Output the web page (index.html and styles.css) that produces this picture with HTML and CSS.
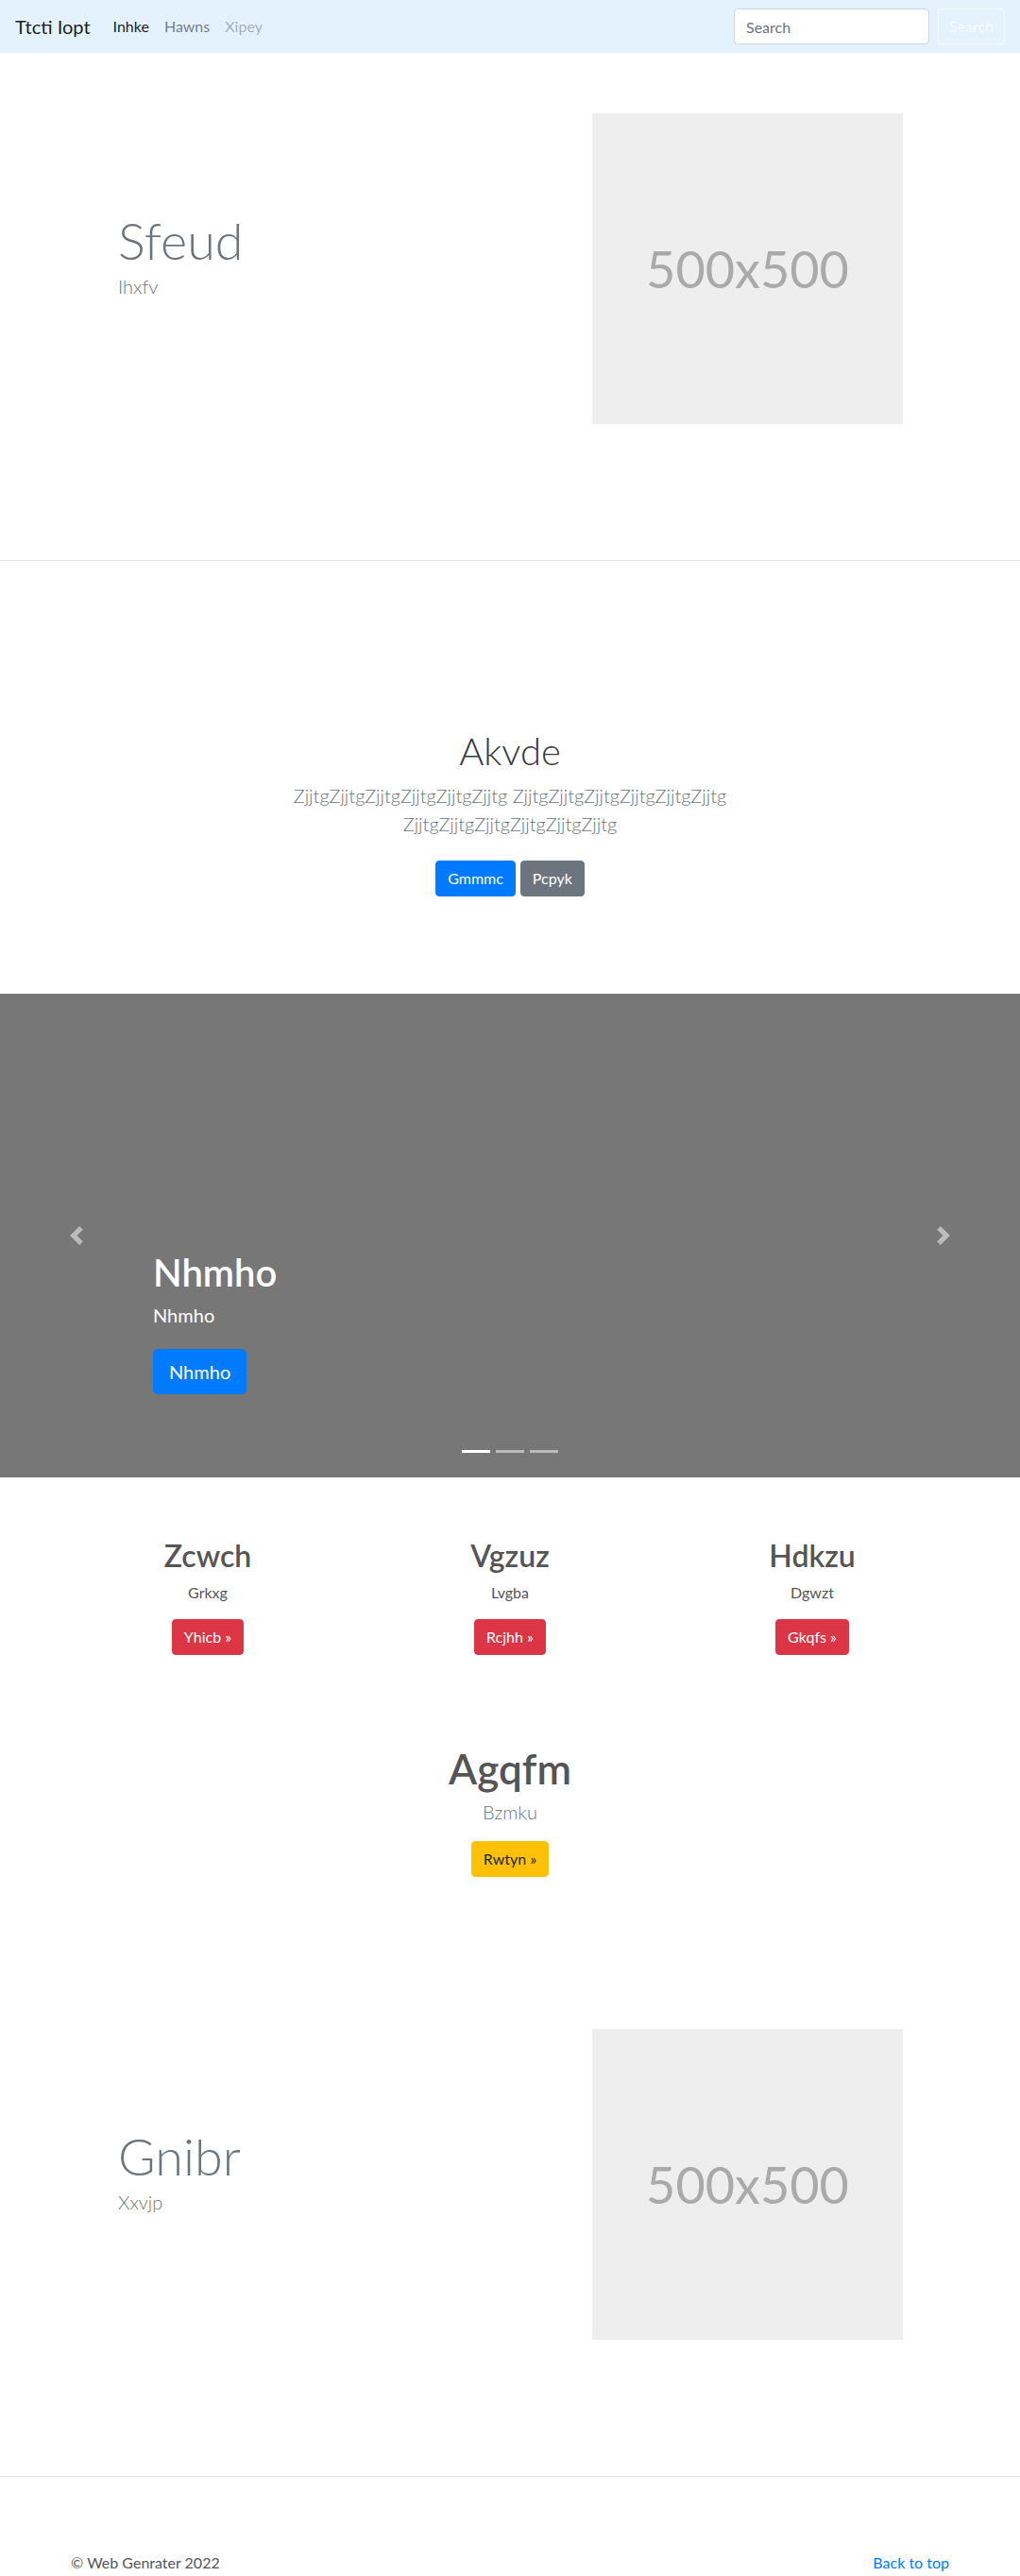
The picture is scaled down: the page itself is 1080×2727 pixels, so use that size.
FILE: index.html
```html
<!DOCTYPE html>
<html lang="en">
<head>
<meta charset="utf-8">
<title>Ttcti Iopt</title>
<link rel="stylesheet" href="styles.css">
</head>
<body>
<nav class="navbar">
  <a class="brand" href="#">Ttcti Iopt</a>
  <ul class="nav">
    <li><a class="nav-link active" href="#">Inhke</a></li>
    <li><a class="nav-link" href="#">Hawns</a></li>
    <li><a class="nav-link disabled" href="#">Xipey</a></li>
  </ul>
  <form class="search">
    <input class="search-input" type="search" placeholder="Search">
    <button class="search-btn" type="button">Search</button>
  </form>
</nav>

<section class="split">
  <div class="split-inner">
    <div class="split-text">
      <h1 class="display">Sfeud</h1>
      <p class="lead muted">Ihxfv</p>
    </div>
    <div class="split-media">
      <div class="placeholder">500x500</div>
    </div>
  </div>
</section>

<section class="intro">
  <div class="intro-inner">
    <h1 class="intro-title">Akvde</h1>
    <p class="lead muted">ZjjtgZjjtgZjjtgZjjtgZjjtgZjjtg ZjjtgZjjtgZjjtgZjjtgZjjtgZjjtg ZjjtgZjjtgZjjtgZjjtgZjjtgZjjtg</p>
    <div class="btn-row">
      <a class="btn btn-primary" href="#">Gmmmc</a>
      <a class="btn btn-secondary" href="#">Pcpyk</a>
    </div>
  </div>
</section>

<section class="carousel">
  <ol class="indicators">
    <li class="active"></li>
    <li></li>
    <li></li>
  </ol>
  <div class="caption">
    <h1 class="caption-title">Nhmho</h1>
    <p class="caption-text">Nhmho</p>
    <p class="caption-actions"><a class="btn btn-lg btn-primary" href="#">Nhmho</a></p>
  </div>
  <a class="control control-prev" href="#" aria-label="Previous">
    <svg width="20" height="20" viewBox="0 0 8 8"><path fill="#fff" d="M5.25 0l-4 4 4 4 1.5-1.5L4.25 4l2.5-2.5L5.25 0z"/></svg>
  </a>
  <a class="control control-next" href="#" aria-label="Next">
    <svg width="20" height="20" viewBox="0 0 8 8"><path fill="#fff" d="M2.75 0l-1.5 1.5L3.75 4l-2.5 2.5L2.75 8l4-4-4-4z"/></svg>
  </a>
</section>

<section class="marketing">
  <div class="col">
    <h2 class="col-title">Zcwch</h2>
    <p class="col-text">Grkxg</p>
    <p class="col-actions"><a class="btn btn-danger" href="#">Yhicb &raquo;</a></p>
  </div>
  <div class="col">
    <h2 class="col-title">Vgzuz</h2>
    <p class="col-text">Lvgba</p>
    <p class="col-actions"><a class="btn btn-danger" href="#">Rcjhh &raquo;</a></p>
  </div>
  <div class="col">
    <h2 class="col-title">Hdkzu</h2>
    <p class="col-text">Dgwzt</p>
    <p class="col-actions"><a class="btn btn-danger" href="#">Gkqfs &raquo;</a></p>
  </div>
</section>

<section class="cta">
  <h2 class="cta-title">Agqfm</h2>
  <p class="lead muted cta-lead">Bzmku</p>
  <p class="col-actions"><a class="btn btn-warning" href="#">Rwtyn &raquo;</a></p>
</section>

<section class="split">
  <div class="split-inner">
    <div class="split-text">
      <h1 class="display">Gnibr</h1>
      <p class="lead muted">Xxvjp</p>
    </div>
    <div class="split-media">
      <div class="placeholder">500x500</div>
    </div>
  </div>
</section>

<footer class="footer">
  <p class="copy">&copy; Web Genrater 2022</p>
  <a class="to-top" href="#">Back to top</a>
</footer>
</body>
</html>
```

FILE: styles.css
```css
* { box-sizing: border-box; }

body {
  margin: 0;
  font-family: Lato, "Liberation Sans", Arial, sans-serif;
  font-size: 16px;
  line-height: 1.5;
  color: #212529;
  background: #fff;
}

a { text-decoration: none; }
p { margin: 0 0 16px; }
h1, h2 { margin: 0 0 8px; line-height: 1.2; }

/* navbar */
.navbar {
  display: flex;
  align-items: center;
  height: 56px;
  padding: 8px 16px;
  background: #e3f2fd;
}
.brand {
  font-size: 20px;
  line-height: 30px;
  margin-right: 16px;
  color: rgba(0, 0, 0, 0.9);
}
.nav {
  display: flex;
  list-style: none;
  margin: 0;
  padding: 0;
}
.nav-link {
  display: block;
  padding: 8px;
  color: rgba(0, 0, 0, 0.5);
}
.nav-link.active { color: rgba(0, 0, 0, 0.9); }
.nav-link.disabled { color: rgba(0, 0, 0, 0.3); }
.search {
  display: flex;
  margin-left: auto;
}
.search-input {
  width: 207px;
  height: 38px;
  padding: 6px 12px;
  margin-right: 9px;
  font: inherit;
  color: #495057;
  background: #fff;
  border: 1px solid #ced4da;
  border-radius: 4px;
}
.search-input::placeholder { color: #6c757d; }
.search-btn {
  width: 71px;
  height: 38px;
  font: inherit;
  color: #f8f9fa;
  background: transparent;
  border: 1px solid #f8f9fa;
  border-radius: 4px;
}

/* shared */
.lead { font-size: 20px; font-weight: 300; }
.muted { color: #6c757d; }

.btn {
  display: inline-block;
  padding: 6px 12px;
  font-size: 16px;
  line-height: 24px;
  border: 1px solid transparent;
  border-radius: 4px;
  color: #fff;
  vertical-align: middle;
}
.btn-lg { padding: 8px 16px; font-size: 20px; line-height: 30px; border-radius: 5px; }
.btn-primary { background: #007bff; border-color: #007bff; }
.btn-secondary { background: #6c757d; border-color: #6c757d; }
.btn-danger { background: #dc3545; border-color: #dc3545; }
.btn-warning { background: #ffc107; border-color: #ffc107; color: #212529; }

/* split sections */
.split { border-bottom: 1px solid #e5e5e5; }
.split-inner {
  display: flex;
  align-items: center;
  width: 960px;
  margin: 0 auto;
  padding: 64px 0 144px;
}
.split-text {
  width: 480px;
  padding-left: 65px;
}
.display {
  font-size: 54px;
  font-weight: 300;
  color: #6c757d;
  margin: 0;
}
.split-text .lead { margin-bottom: 28px; }
.split-media {
  flex: 1;
  padding-left: 87px;
}
.placeholder {
  display: flex;
  align-items: center;
  justify-content: center;
  width: 329px;
  height: 329px;
  background: #eeeeee;
  color: #aaaaaa;
  font-size: 54px;
}

/* intro */
.intro { padding: 177px 0 103px; text-align: center; }
.intro-inner { width: 610px; margin: 0 auto; }
.intro-title { font-size: 40px; font-weight: 300; color: #343a40; }
.intro .lead { margin-bottom: 24px; }
.btn-row { display: flex; justify-content: center; gap: 5px; }

/* carousel */
.carousel {
  position: relative;
  height: 512px;
  margin-bottom: 64px;
  background: #777777;
  overflow: hidden;
}
.caption {
  position: absolute;
  left: 15%;
  right: 15%;
  bottom: 48px;
  padding: 20px 0;
  color: #fff;
  text-align: left;
}
.caption-title { font-size: 40px; font-weight: 600; margin-bottom: 6px; }
.caption-text { font-size: 20px; line-height: 30px; margin-bottom: 21px; }
.caption-actions { margin-bottom: 20px; line-height: 0; }
.control {
  position: absolute;
  top: 0;
  bottom: 0;
  width: 15%;
  display: flex;
  align-items: center;
  justify-content: center;
  opacity: 0.5;
}
.control-prev { left: 0; }
.control-next { right: 0; }
.control svg { display: block; }
.indicators {
  position: absolute;
  left: 0;
  right: 0;
  bottom: 26px;
  display: flex;
  justify-content: center;
  gap: 6px;
  margin: 0;
  padding: 0;
  list-style: none;
}
.indicators li {
  width: 30px;
  height: 3px;
  background: #fff;
  opacity: 0.5;
}
.indicators li.active { opacity: 1; }

/* marketing */
.marketing {
  display: grid;
  grid-template-columns: repeat(3, 1fr);
  width: 960px;
  margin: 0 auto;
  text-align: center;
}
.col-title { font-size: 32px; font-weight: 600; color: #555; }
.col-text { color: #555; }
.col-actions { line-height: 0; }

.cta { padding: 78px 0 81px; text-align: center; }
.cta-title { font-size: 44px; font-weight: 600; color: #555; margin-bottom: 4px; }
.cta-lead { margin-bottom: 16px; }

/* footer */
.footer {
  display: flex;
  justify-content: space-between;
  width: 930px;
  margin: 0 auto;
  padding: 79px 0 2px;
}
.copy { margin: 0; color: #555; }
.to-top { color: #007bff; }
```
